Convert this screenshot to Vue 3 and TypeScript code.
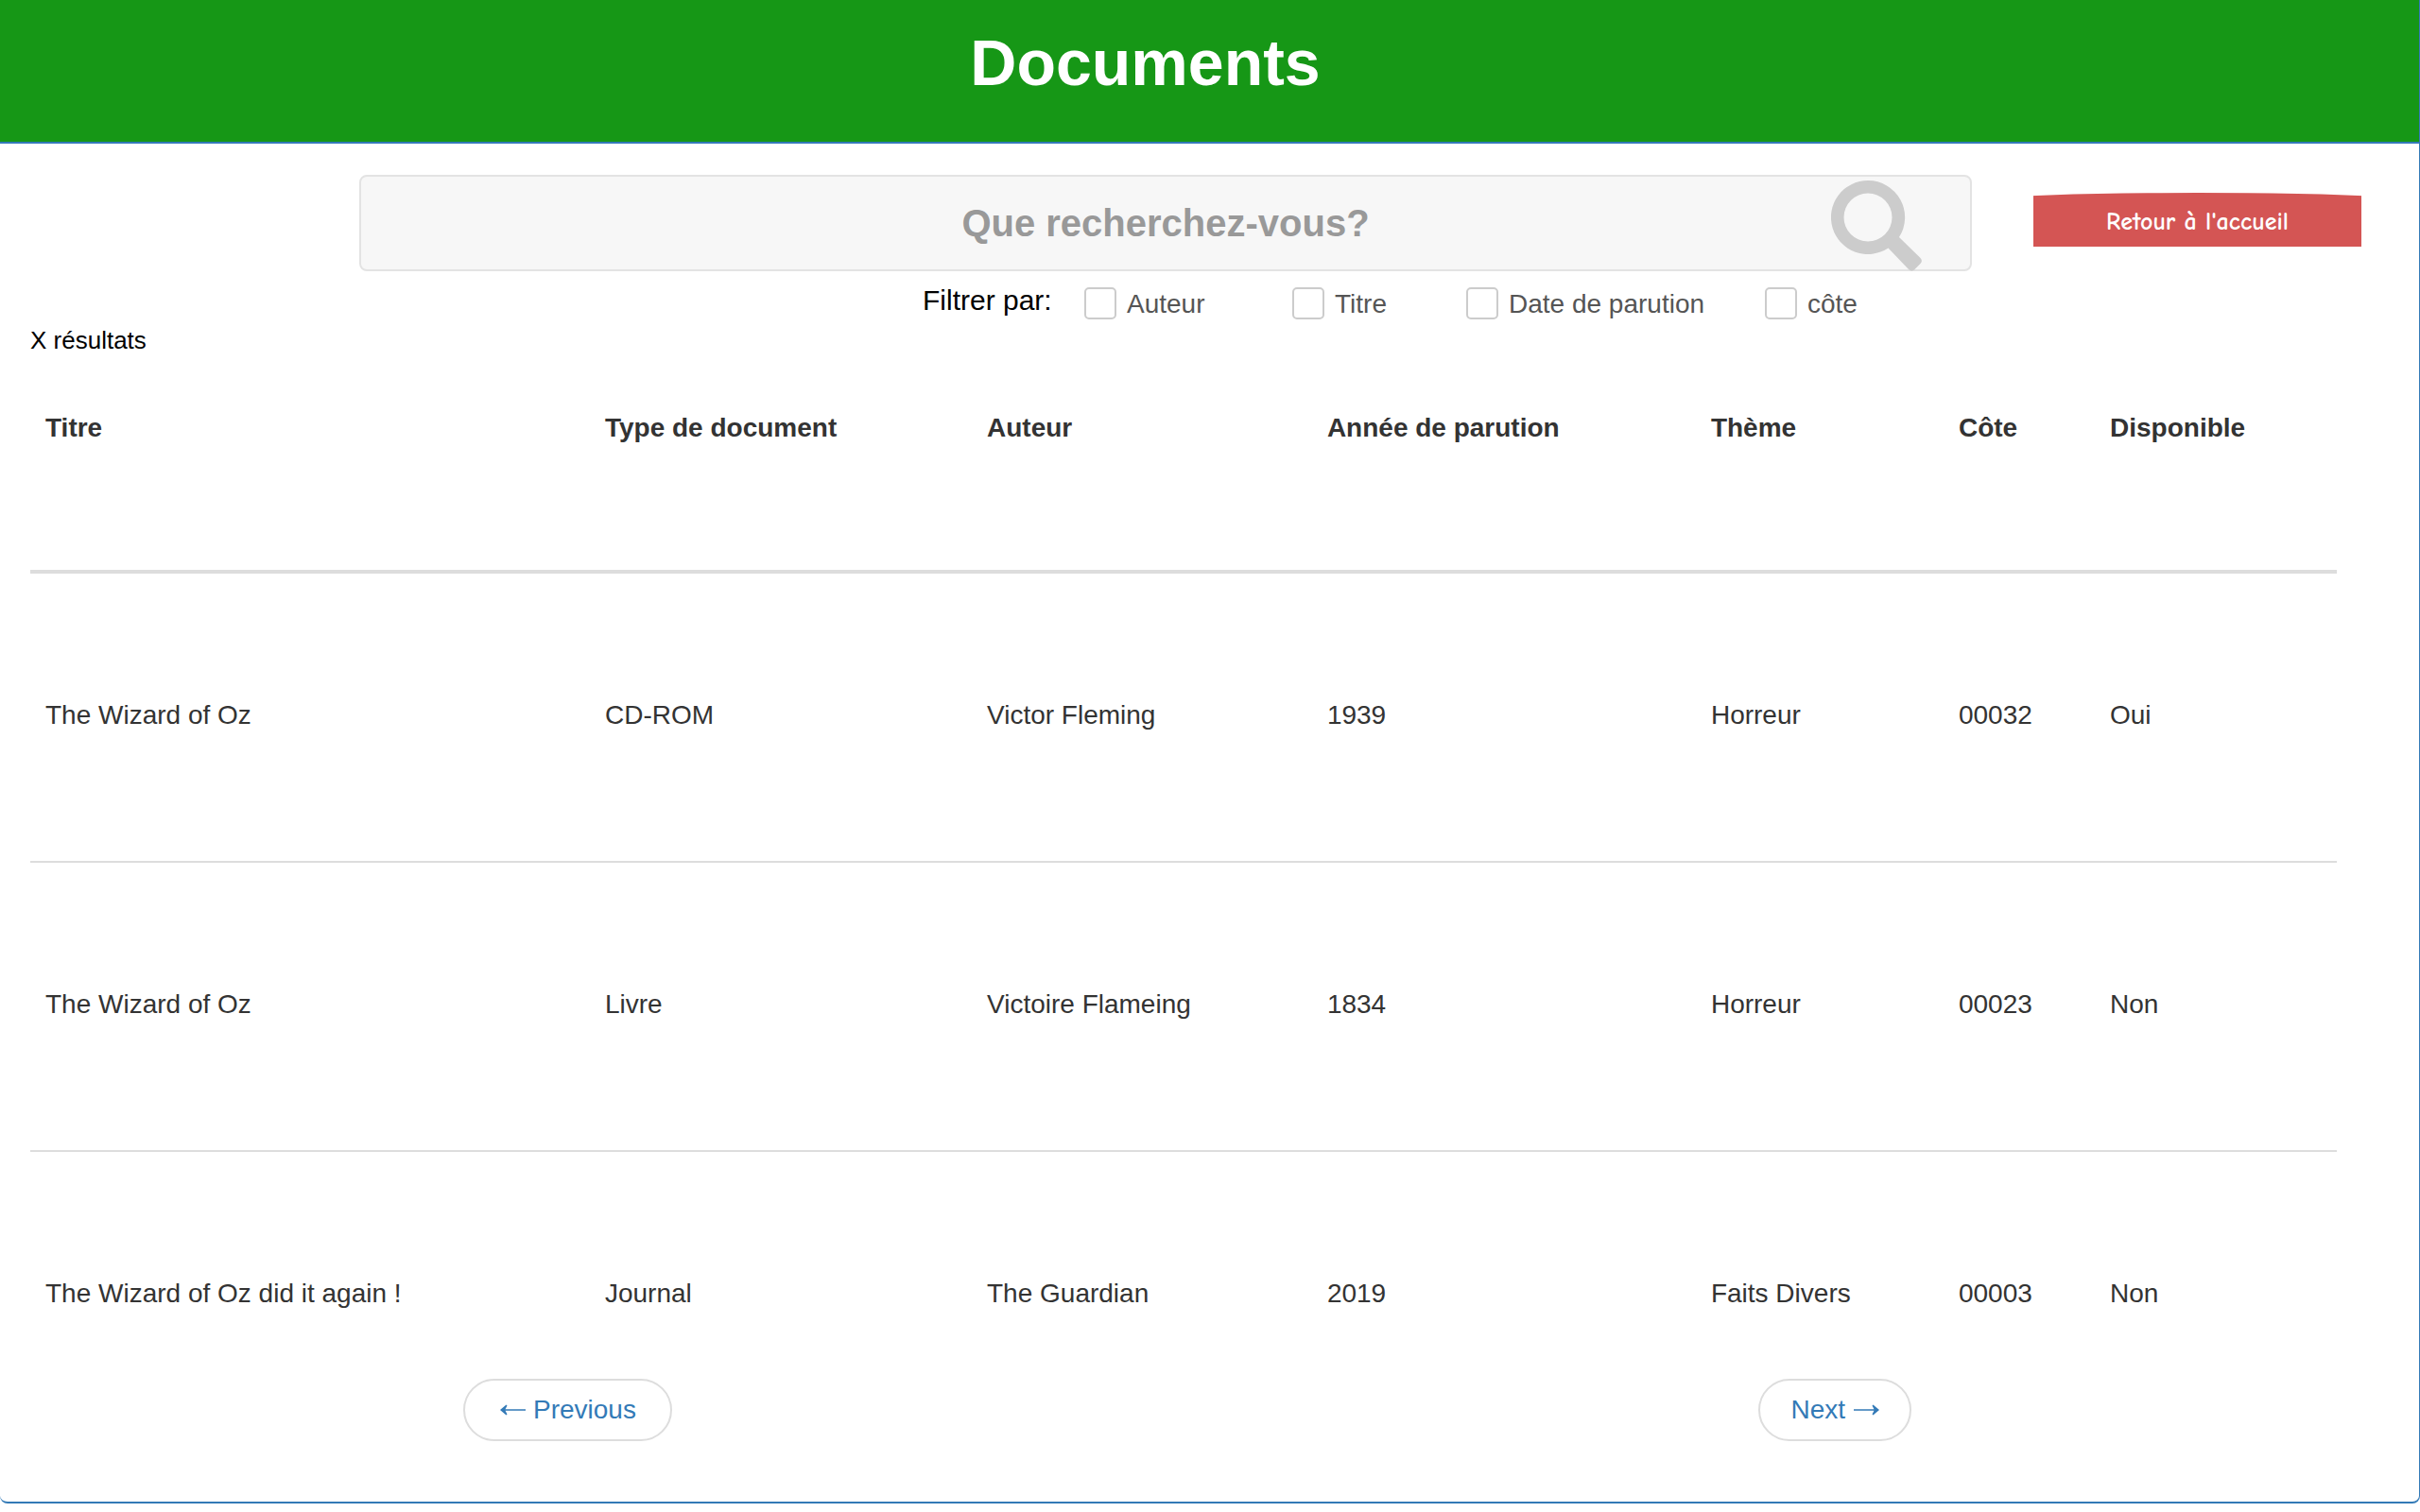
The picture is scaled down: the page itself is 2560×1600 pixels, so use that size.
<script setup lang="ts">
import { ref } from 'vue'

interface DocumentRow {
  titre: string
  type: string
  auteur: string
  annee: string
  theme: string
  cote: string
  disponible: string
}

interface Filter {
  id: string
  label: string
  checked: boolean
}

const query = ref('')

const filters = ref<Filter[]>([
  { id: 'auteur', label: 'Auteur', checked: false },
  { id: 'titre', label: 'Titre', checked: false },
  { id: 'date', label: 'Date de parution', checked: false },
  { id: 'cote', label: 'côte', checked: false },
])

const columns = ['Titre', 'Type de document', 'Auteur', 'Année de parution', 'Thème', 'Côte', 'Disponible']

const rows: DocumentRow[] = [
  { titre: 'The Wizard of Oz', type: 'CD-ROM', auteur: 'Victor Fleming', annee: '1939', theme: 'Horreur', cote: '00032', disponible: 'Oui' },
  { titre: 'The Wizard of Oz', type: 'Livre', auteur: 'Victoire Flameing', annee: '1834', theme: 'Horreur', cote: '00023', disponible: 'Non' },
  { titre: 'The Wizard of Oz did it again !', type: 'Journal', auteur: 'The Guardian', annee: '2019', theme: 'Faits Divers', cote: '00003', disponible: 'Non' },
]
</script>

<template>
  <div class="panel">
    <header class="heading">
      <h1>Documents</h1>
    </header>

    <main>
      <form class="search-row" @submit.prevent>
        <div class="search-box">
          <input v-model="query" type="text" aria-label="Rechercher" placeholder="Que recherchez-vous?" />
          <button class="search-button" type="submit" aria-label="Lancer la recherche">
            <svg viewBox="0 0 96 96" width="96" height="96" aria-hidden="true">
              <path
                fill="#ccc"
                fill-rule="evenodd"
                d="M39 0a39 39 0 1 0 21.500 71.500L81.500 93.500Q85 97.500 88.500 94L94.500 88Q97.500 85 94 81.500L72 60A39 39 0 0 0 39 0ZM39 13.500a25.500 25.500 0 1 1 0 51a25.500 25.500 0 1 1 0-51Z"
              />
            </svg>
          </button>
        </div>
        <button class="home-button" type="button">Retour à l'accueil</button>
      </form>

      <div class="filters" role="group" aria-labelledby="filters-title">
        <span id="filters-title" class="filters-title">Filtrer par:</span>
        <label v-for="filter in filters" :key="filter.id" class="filter" :for="filter.id">
          <input :id="filter.id" v-model="filter.checked" type="checkbox" />
          <span>{{ filter.label }}</span>
        </label>
      </div>

      <p class="count">X résultats</p>

      <div class="table-wrap">
        <table>
          <colgroup>
            <col v-for="(column, i) in columns" :key="column" :class="`col-${i}`" />
          </colgroup>
          <thead>
            <tr>
              <th v-for="column in columns" :key="column" scope="col">{{ column }}</th>
            </tr>
          </thead>
          <tbody>
            <tr v-for="row in rows" :key="row.cote">
              <td>{{ row.titre }}</td>
              <td>{{ row.type }}</td>
              <td>{{ row.auteur }}</td>
              <td>{{ row.annee }}</td>
              <td>{{ row.theme }}</td>
              <td>{{ row.cote }}</td>
              <td>{{ row.disponible }}</td>
            </tr>
          </tbody>
        </table>
      </div>

      <nav class="pager" aria-label="Pagination">
        <a class="previous" href="#previous">
          <svg viewBox="0 0 28 12" width="28" height="12" aria-hidden="true">
            <path fill="#337ab7" d="M1 6L7.500 0.500L8.500 1.500L6.500 5.200H28V6.800H6.500L8.500 10.500L7.500 11.500Z" />
          </svg>
          <span>Previous</span>
        </a>
        <a class="next" href="#next">
          <span>Next</span>
          <svg viewBox="0 0 28 12" width="28" height="12" aria-hidden="true">
            <path fill="#337ab7" d="M28 6L21.500 0.500L20.500 1.500L22.500 5.200H1V6.800H22.500L20.500 10.500L21.500 11.500Z" />
          </svg>
        </a>
      </nav>
    </main>
  </div>
</template>

<style>
body {
  margin: 0;
  background: #fff;
}
</style>

<style scoped>
* {
  box-sizing: border-box;
}

.panel {
  border: solid #337ab7;
  border-width: 0 1px 2px 0;
  border-radius: 0 0 8px 8px;
  background: #fff;
  font-family: "Liberation Sans", Arial, sans-serif;
  font-size: 28px;
  line-height: 40px;
  color: #333;
}

.heading {
  height: 152px;
  padding-right: 136px;
  border-bottom: 2px solid #337ab7;
  background: #169716;
  text-align: center;
}

h1 {
  margin: 0;
  padding-top: 26px;
  font-size: 68px;
  line-height: 80px;
  font-weight: bold;
  color: #fff;
}

.search-row {
  display: grid;
  grid-template-columns: 1706fr 347fr;
  column-gap: 65px;
  align-items: start;
  margin: 33px 61px 0 380px;
}

.search-box {
  position: relative;
}

.search-box input {
  display: block;
  width: 100%;
  height: 102px;
  padding: 0 16px;
  border: 2px solid #e3e3e3;
  border-radius: 8px;
  background: #f7f7f7;
  font: bold 40px "Liberation Sans", Arial, sans-serif;
  text-align: center;
  color: #333;
}

.search-box input::placeholder {
  color: #999;
  opacity: 1;
}

.search-button {
  position: absolute;
  top: 6px;
  right: 53px;
  padding: 0;
  border: 0;
  background: none;
}

.search-button svg {
  display: block;
}

.home-button {
  height: 57px;
  margin-top: 19px;
  padding: 4px 0 0;
  border: 0;
  background: #d45554;
  clip-path: ellipse(156% 100% at 50% 100%);
  font: bold 26px/36px "Comic Sans MS", "Comic Neue", Lato, sans-serif;
  color: #fff;
}

.filters {
  display: grid;
  grid-template-columns: 171px 220px 184px 316px auto;
  margin: 17px 0 0 976px;
}

.filters-title {
  font-size: 30px;
  line-height: 28px;
  color: #000;
}

.filter {
  display: flex;
  gap: 11px;
  line-height: 36px;
  color: #555;
}

.filter input {
  appearance: none;
  flex: none;
  width: 34px;
  height: 34px;
  margin: 0;
  border: 2px solid #ccc;
  border-radius: 5px;
  background: #fff;
}

.count {
  margin: 5px 32px 0;
  font-size: 26px;
  line-height: 30px;
  color: #000;
}

.table-wrap {
  margin: 42px 87px 0 32px;
}

table {
  width: 100%;
  table-layout: fixed;
  border-collapse: separate;
  border-spacing: 0;
}

.col-0 { width: 24.26%; }
.col-1 { width: 16.56%; }
.col-2 { width: 14.75%; }
.col-3 { width: 16.64%; }
.col-4 { width: 10.74%; }
.col-5 { width: 6.56%; }
.col-6 { width: 10.49%; }

th {
  padding: 16px 16px 130px;
  border-bottom: 4px solid #ddd;
  text-align: left;
}

td {
  padding: 130px 16px 134px;
  border-bottom: 2px solid #ddd;
}

tbody tr:last-child td {
  padding-bottom: 70px;
  border-bottom: 0;
}

.pager {
  display: flex;
  justify-content: space-between;
  padding: 0 537px 64px 490px;
}

.pager a {
  display: flex;
  align-items: center;
  gap: 8px;
  height: 66px;
  border: 2px solid #ddd;
  border-radius: 33px;
  text-decoration: none;
  color: #337ab7;
}

.previous {
  padding: 0 36px;
}

.next {
  padding: 0 32px;
}
</style>
